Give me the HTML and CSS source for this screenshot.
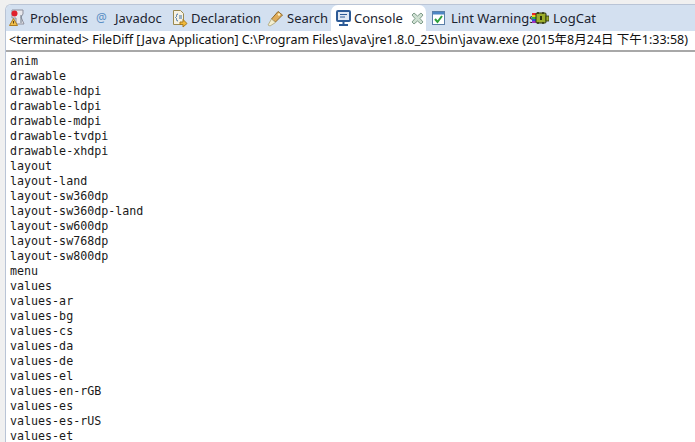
FILE: index.html
```html
<!DOCTYPE html>
<html lang="en">
<head>
<meta charset="utf-8">
<title>Console</title>
<link rel="stylesheet" href="styles.css">
</head>
<body>
<div class="view">
  <div class="tabs">
    <div class="tab tab-problems">
      <svg class="ico" width="17" height="18" viewBox="0 0 17 18"><path d="M3 1h11v4l-2 3 3 7H7V9H3z" fill="#e8e8ec" stroke="#8d8f9c"/><circle cx="5.5" cy="4.5" r="3" fill="#e0202c"/><path d="M12 6v8" stroke="#6f7c8c"/><path d="M4.500 9.500l4 7h-8z" fill="#f1c04a" stroke="#b07c20"/><path d="M4.500 12v2.500" stroke="#5a3c10"/></svg>
      <span>Problems</span>
    </div>
    <div class="tab tab-javadoc">
      <span class="at">@</span>
      <span>Javadoc</span>
    </div>
    <div class="tab tab-decl">
      <svg class="ico" width="16" height="19" viewBox="0 0 16 19"><path d="M1.500 1.500h7l3 3v11h-10z" fill="#f7f3e4" stroke="#9a8a50"/><path d="M6 5q-1.500 0-1.500 1.500v1L3.500 8.500l1 1v1Q4.500 12 6 12" fill="none" stroke="#3a6ea8"/><path d="M7 7h3M7 9h3" stroke="#3a6ea8"/><path d="M8 13h3v-2.500l4 4-4 3.500v-2.500H8z" fill="#f0b93a" stroke="#a87a1c"/></svg>
      <span>Declaration</span>
    </div>
    <div class="tab tab-search">
      <svg class="ico" width="17" height="17" viewBox="0 0 17 17"><path d="M11 1.500l4.500 3.500-7 7-4-3z" fill="#e0ad5c" stroke="#8f6a2a"/><path d="M4.500 9l4 3.500L3 16 1 15z" fill="#f4efd0" stroke="#b8b08a"/><circle cx="12" cy="4.500" r="1.200" fill="#fff3c8"/></svg>
      <span>Search</span>
    </div>
    <div class="tab tab-console">
      <svg class="ico" width="15" height="16" viewBox="0 0 15 16"><rect x="1" y="1" width="13" height="10" rx="1" fill="#dfe8f4" stroke="#2c5a96" stroke-width="2"/><path d="M4 4.500h7M4 7h5" stroke="#2c5a96"/><path d="M7.500 12v2M3 15h9" stroke="#2c5a96" stroke-width="2"/></svg>
      <span>Console</span>
      <svg class="close" width="13" height="13" viewBox="0 0 13 13"><path d="M1 3l2-2 3.500 3L10 1l2 2-3 3.500 3 3.500-2 2-3.500-3L3 12l-2-2 3-3.500z" fill="#cfe0d2" stroke="#7f9c8a"/></svg>
    </div>
    <div class="tab tab-lint">
      <svg class="ico" width="13" height="14" viewBox="0 0 13 14"><rect x=".5" y=".5" width="12" height="13" fill="#fff" stroke="#5a7fa8"/><path d="M1 1h11v2.500H1z" fill="#4d86c4"/><path d="M3 8l2.500 3L10 5" fill="none" stroke="#2ea03c" stroke-width="2"/></svg>
      <span>Lint Warnings</span>
    </div>
    <div class="tab tab-logcat">
      <svg class="ico" width="17" height="14" viewBox="0 0 17 14"><path d="M0 2h5v2H0z" fill="#e8282c"/><path d="M0 4h5v2H0z" fill="#f0d020"/><path d="M0 6h5v2H0z" fill="#30b040"/><path d="M0 8h5v2H0z" fill="#2a50e0"/><path d="M0 10h5v2H0z" fill="#a030c0"/><rect x="4" y="2" width="10" height="10" rx="1" fill="#9cae2c" stroke="#2c3410"/><rect x="14" y="5" width="3" height="5" fill="#9cae2c" stroke="#2c3410" stroke-width=".8"/><path d="M6 1v2M11 1v2M6 11v2M11 11v2" stroke="#2c3410" stroke-width="1.500"/><path d="M8 5h2v4H8z" fill="#2c3410"/></svg>
      <span>LogCat</span>
    </div>
  </div>
  <div class="status">&lt;terminated&gt; FileDiff [Java Application] C:\Program Files\Java\jre1.8.0_25\bin\javaw.exe (2015年8月24日 下午1:33:58)</div>
  <pre class="output">anim
drawable
drawable-hdpi
drawable-ldpi
drawable-mdpi
drawable-tvdpi
drawable-xhdpi
layout
layout-land
layout-sw360dp
layout-sw360dp-land
layout-sw600dp
layout-sw768dp
layout-sw800dp
menu
values
values-ar
values-bg
values-cs
values-da
values-de
values-el
values-en-rGB
values-es
values-es-rUS
values-et</pre>
</div>
</body>
</html>
```
FILE: styles.css
```css
html, body {
  margin: 0;
  padding: 0;
  height: 100%;
  overflow: hidden;
  background: #f0f0f0;
}
.view {
  margin: 4px 0 0 5px;
  height: 438px;
  background: #fff;
  border-top: 1px solid #b9c4d6;
  border-left: 1px solid #b9c4d6;
  border-top-left-radius: 6px;
  overflow: hidden;
  box-sizing: border-box;
}
.tabs {
  display: flex;
  height: 26px;
  background: #d3e0f0;
  font: 13px/26px "Noto Sans", "Open Sans", sans-serif;
  color: #1c2430;
  box-sizing: border-box;
}
.tab {
  display: flex;
  align-items: center;
  white-space: nowrap;
}
.ico, .close { flex: none; }
.tab-problems { padding-left: 3px; width: 88px; gap: 4px; box-sizing: border-box; }
.tab-javadoc { padding-left: 2px; width: 77px; gap: 8px; box-sizing: border-box; }
.at { color: #5b8fc4; font-size: 12px; width: 11px; }
.tab-decl { padding-left: 1px; width: 95px; gap: 3px; box-sizing: border-box; }
.tab-search { padding-left: 1px; width: 65px; gap: 3px; box-sizing: border-box; }
.tab-console {
  width: 95px;
  padding-left: 5px;
  gap: 3px;
  box-sizing: border-box;
  background: #fff;
  border-radius: 7px 7px 0 0;
}
.close { margin-left: 5px; }
.tab-lint { padding-left: 6px; width: 106px; gap: 6px; box-sizing: border-box; }
.tab-logcat { gap: 4px; }
.status {
  height: 19px;
  border-bottom: 2px solid #a8a8a8;
  padding-left: 3px;
  font: 12.500px/18px "Noto Sans", "Noto Sans CJK SC", sans-serif;
  color: #111;
  white-space: nowrap;
  box-sizing: content-box;
}
.output {
  margin: 0;
  padding: 2px 0 0 4px;
  font: 11.670px/15px "DejaVu Sans Mono", monospace;
  color: #1a1a1a;
}
```
